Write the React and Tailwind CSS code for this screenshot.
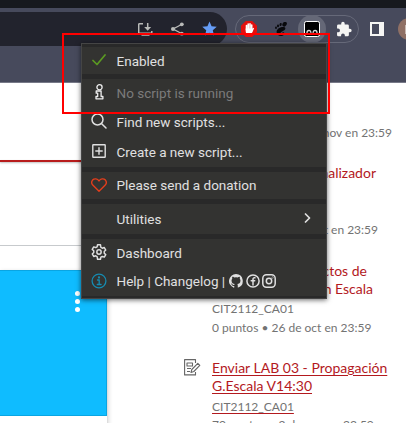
import React from "react";

const stroke = { fill: "none", stroke: "currentColor", strokeLinecap: "round", strokeLinejoin: "round" };

function Toolbar() {
  return (
    <div className="relative flex h-[38px] bg-[#474a5c] pt-1">
      <div className="flex h-[34px] w-[227px] shrink-0 items-start justify-end rounded-r-[17px] bg-[#22232d] pr-[10px] pt-[9px] text-[#b9bab8]">
        <svg className="mr-[18px] mt-[1px] h-[15px] w-[15px]" viewBox="0 0 15 15" {...stroke} strokeWidth="1.5" strokeLinecap="butt">
          <path d="M5 1.7H1.500a.8.8 0 0 0-.8.8v8a.8.8 0 0 0 .8.8H13a.8.8 0 0 0 .8-.8V9M3.500 13h8" />
          <path d="M9.700 1v6" />
          <path d="M6.200 5h7L9.700 8.800z" fill="currentColor" stroke="none" />
        </svg>
        <svg className="mr-[18px] mt-[1px] h-[14px] w-[13px]" viewBox="0 0 13 14" fill="currentColor">
          <path d="M11 2.200 2 7l9 4.800" fill="none" stroke="currentColor" strokeWidth="1.3" />
          <circle cx="10.8" cy="2.3" r="1.9" /><circle cx="2" cy="7" r="2" /><circle cx="10.8" cy="11.7" r="1.9" />
        </svg>
        <svg className="h-[15px] w-[15px] text-[#669df6]" viewBox="0 0 16 16" fill="currentColor">
          <path d="m8 .6 2.200 5.100 5.500.5-4.200 3.700 1.300 5.500L8 12.500l-4.800 2.900 1.300-5.500L.3 6.200l5.500-.5z" />
        </svg>
      </div>
      <div className="ml-2 mt-[3px] flex h-[28px] w-[124px] shrink-0 items-center rounded-full border border-[#666979] pl-[5px]">
        <svg className="h-4 w-4 shrink-0" viewBox="0 0 16 16">
          <path d="M4.800 0h6.400L16 4.800v6.400L11.200 16H4.800L0 11.200V4.800z" fill="#e3100e" />
          <path d="M5.500 4.500V9M7.200 3v6M9 2.800V9M10.700 4v6" stroke="#fff" strokeWidth="1.6" strokeLinecap="round" />
          <path d="M4.700 7.500h6.700l1.200-.8.5.5-2.200 5c-.5 1-1.200 1.300-2.500 1.300-2.200 0-3.700-.9-3.700-3z" fill="#fff" />
        </svg>
        <svg className="ml-[18px] h-[14px] w-[12px] shrink-0" viewBox="0 0 12 14" fill="#08090c">
          <ellipse cx="9.6" cy="2.2" rx="2" ry="2.6" transform="rotate(35 9.6 2.2)" />
          <ellipse cx="5.6" cy="2.5" rx="1.1" ry="1.6" transform="rotate(15 5.6 2.5)" />
          <ellipse cx="3" cy="3.9" rx="1" ry="1.4" />
          <ellipse cx="1" cy="5.7" rx=".9" ry="1.2" />
          <path d="M10 5.400C7 4.300 1.600 6.400 1.600 10c0 2.400 2.200 4 4.500 4 2 0 3.300-1.300 3.200-2.900-.1-1.200-1.400-1.200-1.800-.5-.4.9-1.200 1.400-1.800.7C4.600 9.600 12.100 8.600 10 5.400z" />
        </svg>
        <span className="ml-[11px] flex h-[28px] w-[28px] shrink-0 items-center justify-center rounded-full bg-[#656877]">
          <svg className="h-4 w-4" viewBox="0 0 16 16">
            <rect x=".5" y=".5" width="15" height="15" rx="1.8" fill="#000" stroke="#fff" />
            <circle cx="4.900" cy="11.300" r="2.500" fill="#ddd" /><circle cx="11.100" cy="11.300" r="2.500" fill="#ddd" />
            <circle cx="5" cy="11.600" r="1.300" fill="#000" /><circle cx="11" cy="11.600" r="1.300" fill="#000" />
          </svg>
        </span>
        <svg className="ml-[10px] h-[16px] w-[16px] shrink-0" viewBox="1 0 22 23" fill="#f5f5f3">
          <path d="M20.500 11H19V7a2 2 0 0 0-2-2h-4V3.500a2.500 2.500 0 0 0-5 0V5H4a2 2 0 0 0-2 2v3.800h1.500a2.700 2.700 0 0 1 0 5.400H2V20a2 2 0 0 0 2 2h3.800v-1.500a2.700 2.700 0 0 1 5.400 0V22H17a2 2 0 0 0 2-2v-4h1.500a2.500 2.500 0 0 0 0-5z" />
        </svg>
      </div>
      <div className="ml-[11px] mt-[10px] h-[14px] w-[14px] shrink-0 border-2 border-r-[5px] border-[#f5f5f3]" />
      <div className="ml-[14px] mt-[6px] flex h-[22px] w-[22px] shrink-0 rounded-full bg-[#8f7065]">
        <i className="ml-[7px] mt-[7px] h-[9px] w-[2px] bg-[#c9b8b0]" />
      </div>
    </div>
  );
}

function LeftColumn() {
  return (
    <div className="flex w-[108px] shrink-0 flex-col">
      <div className="mt-[77px] h-[2px] w-[100px] bg-[#b81c1c] shadow-[0_1px_2px_rgba(0,0,0,0.25)]" />
      <div className="mt-[83px] h-px w-[100px] bg-[#c7cacd]" />
      <div className="mt-6 flex h-[170px] w-[108px] flex-col border-r border-[#dddddd] shadow-[1px_1px_4px_rgba(0,0,0,0.14)]">
        <div className="flex h-[146px] w-[107px] flex-col items-end gap-[3.3px] border border-l-0 border-[#0aa5e2] bg-[#0fbcff] pr-[26px] pt-[19.500px]">
          <i className="h-[5px] w-[5px] rounded-full bg-white" />
          <i className="h-[5px] w-[5px] rounded-full bg-white" />
          <i className="h-[5px] w-[5px] rounded-full bg-white" />
        </div>
      </div>
    </div>
  );
}

function TaskList() {
  return (
    <div className="ml-[75px] flex w-[220px] shrink-0 flex-col whitespace-nowrap font-['Lato',sans-serif] text-[12px] leading-[18px] text-[#737373]">
      <div className="mt-[41px] w-[209px] text-right">nov en 23:59</div>
      <div className="mt-[22px] w-[193px] text-right text-[14px] text-[#b3191e]">nalizador</div>
      <div className="mt-[39px] w-[195px] text-right">oct en 23:59</div>
      <div className="mt-[23px] w-[184px] text-right text-[14px] text-[#b3191e]">ctos de</div>
      <div className="w-[190px] text-right text-[14px] text-[#b3191e]">en Escala</div>
      <div className="ml-[29px] mt-[2px]">CIT2112_CA01</div>
      <div className="ml-[29px] mt-[1px]">0 puntos • 26 de oct en 23:59</div>
      <div className="mt-[22px] flex">
        <svg className="mr-[11px] h-[17px] w-[18px] shrink-0 text-[#666]" viewBox="0 0 18 17" {...stroke} strokeWidth="1.1" strokeLinecap="butt">
          <path d="M12.500 4V.6H1.600v15.300h10.900v-3" />
          <path d="M4 4h5.500v3H4zM4 9.500h4M4 12.500h3" />
          <path d="m8 13.500.8-3 6-6.200 2 2-6 6.200z" />
        </svg>
        <div>
          <div className="text-[14px] leading-[18px] text-[#b3191e] underline underline-offset-2">Enviar LAB 03 - Propagación<br />G.Escala V14:30</div>
          <div className="mt-[3px] underline decoration-[#b3191e] underline-offset-2">CIT2112_CA01</div>
          <div>70 puntos • 2 de nov en 23:59</div>
        </div>
      </div>
    </div>
  );
}

function Row({ icon, children, className }) {
  return (
    <div className={`flex items-center ${className}`}>
      <span className="mr-[0.500px] flex h-4 w-[34px] shrink-0 items-center justify-center">{icon}</span>
      <div className="flex flex-1 items-center pb-[2px]">{children}</div>
    </div>
  );
}

function Menu() {
  return (
    <div className="absolute left-[81px] top-[43px] flex h-[256px] w-[246px] flex-col gap-[5px] border border-[#454545] bg-[#292929] pb-[2px] pt-[3px] font-['Roboto',sans-serif] text-[13.500px] leading-[18px] text-[#e0e0e0] shadow-[0_1px_5px_rgba(0,0,0,0.6)]">
      <div className="h-[27px] bg-[#333331]">
        <Row className="h-[29px]" icon={<svg className="mb-1 h-[12px] w-[14px] text-[#5b9a22]" viewBox="0 0 14 12" {...stroke} strokeWidth="1.7"><path d="m1 6.500 4 4L13 1" /></svg>}>Enabled</Row>
      </div>
      <div className="h-[88px] bg-[#333331]">
        <Row className="h-[29px] text-[#7b7b7b]" icon={<svg className="mb-[3px] h-[16px] w-[9px] text-[#eeeeee]" viewBox="0 0 9 16" {...stroke} strokeWidth="1.3"><circle cx="4.500" cy="3.300" r="2.600" /><path d="M1.200 7h4.900v5.500h1.800v2.300H1v-2.300h1.700V9.200H1.200z" /></svg>}>No script is running</Row>
        <Row className="h-[30px]" icon={<svg className="mb-[4px] h-[16px] w-[16px]" viewBox="0 0 16 16" {...stroke} strokeWidth="1.5"><circle cx="6.500" cy="6.500" r="5.500" /><path d="m10.700 10.700 4.300 4.300" /></svg>}>Find new scripts...</Row>
        <Row className="h-[29px]" icon={<svg className="mb-[3px] h-[14px] w-[14px]" viewBox="0 0 14 14" {...stroke} strokeWidth="1.4"><rect x=".8" y=".8" width="12.400" height="12.400" rx=".5" /><path d="M7 3.800v6.400M3.800 7h6.400" /></svg>}>Create a new script...</Row>
      </div>
      <div className="h-[27px] bg-[#333331]">
        <Row className="h-[27px]" icon={<svg className="mb-[2px] h-[14px] w-[16px] text-[#e33e1c]" viewBox="0 0 16 14" {...stroke} strokeWidth="1.4"><path d="M8 13.200 2 7.300C.6 5.900.4 3.600 1.600 2.100 3.400.2 6.500.5 8 3c1.500-2.500 4.600-2.800 6.400-.9 1.200 1.500 1 3.800-.4 5.200z" /></svg>}>Please send a donation</Row>
      </div>
      <div className="h-[30px] bg-[#333331]">
        <Row className="h-[31px]">
          Utilities
          <svg className="mb-[1px] ml-auto mr-[15px] h-[10px] w-[7px]" viewBox="0 0 7 10" {...stroke} strokeWidth="1.7"><path d="m1.500 1 4 4-4 4" /></svg>
        </Row>
      </div>
      <div className="h-[57px] bg-[#333331]">
        <Row className="h-[29px]" icon={<svg className="mb-[4px] h-[16px] w-[16px]" viewBox="1 1 22 22" {...stroke} strokeWidth="2"><circle cx="12" cy="12" r="3" /><path d="m10 2-.6 2.800-2 1.100-2.700-.9-2 3.400 2.100 2v2.300l-2.100 2 2 3.400 2.700-.9 2 1.100L10 22h4l.6-2.800 2-1.100 2.700.9 2-3.400-2.100-2v-2.300l2.100-2-2-3.400-2.700.9-2-1.100L14 2z" /></svg>}>Dashboard</Row>
        <Row className="h-[28px]" icon={<svg className="mb-[3px] h-[16px] w-[16px] text-[#168bb0]" viewBox="0 0 16 16" {...stroke} strokeWidth="1.3"><circle cx="8" cy="8" r="6.900" /><path d="M6.500 7h1.700v4.500M6.300 11.500h3.800" /><circle cx="8" cy="4.500" r=".5" fill="currentColor" /></svg>}>
          <span>Help | Changelog |</span>
          <span className="ml-[4px] flex gap-[2.500px]">
            <svg className="h-[14px] w-[14px]" viewBox="0 0 16 16" fill="currentColor"><path d="M8 0a8 8 0 0 0-2.530 15.590c.4.070.55-.17.55-.38v-1.490c-2.230.48-2.700-1.070-2.700-1.070-.36-.92-.89-1.170-.89-1.170-.73-.5.060-.49.060-.49.8.060 1.230.83 1.230.83.71 1.220 1.870.87 2.330.66.070-.52.280-.87.510-1.070-1.780-.2-3.650-.89-3.650-3.950 0-.87.310-1.590.83-2.150-.08-.2-.36-1.020.080-2.120 0 0 .67-.21 2.200.82a7.600 7.600 0 0 1 4 0c1.530-1.040 2.200-.82 2.200-.82.44 1.100.16 1.920.080 2.120.51.56.82 1.270.82 2.150 0 3.070-1.870 3.750-3.650 3.950.29.25.54.73.54 1.480v2.200c0 .21.150.46.550.38A8 8 0 0 0 8 0z" /></svg>
            <svg className="h-[14px] w-[14px]" viewBox="0 0 14 14" {...stroke} strokeWidth="1.500"><circle cx="7" cy="7" r="6.100" /><path d="M7 11V5.300c0-1.200.7-1.700 1.900-1.500M5.200 6.700h3.500" /></svg>
            <svg className="h-[14px] w-[14px]" viewBox="0 0 14 14" {...stroke} strokeWidth="1.500"><rect x=".8" y=".8" width="12.400" height="12.400" rx="3.600" /><circle cx="7" cy="7" r="2.700" /><circle cx="10.600" cy="3.500" r=".2" /></svg>
          </span>
        </Row>
      </div>
    </div>
  );
}

export default function App() {
  return (
    <div className="relative flex h-[423px] w-[406px] flex-col overflow-hidden bg-white">
      <div className="h-2 shrink-0 bg-[#17191e]" />
      <Toolbar />
      <div className="h-[37px] shrink-0 border-b border-[#777988] bg-[#474a5c]" />
      <div className="flex">
        <LeftColumn />
        <TaskList />
      </div>
      <Menu />
      <div className="absolute left-[62px] top-[33px] h-[81px] w-[268px] border-2 border-[#ff0000]" />
    </div>
  );
}
